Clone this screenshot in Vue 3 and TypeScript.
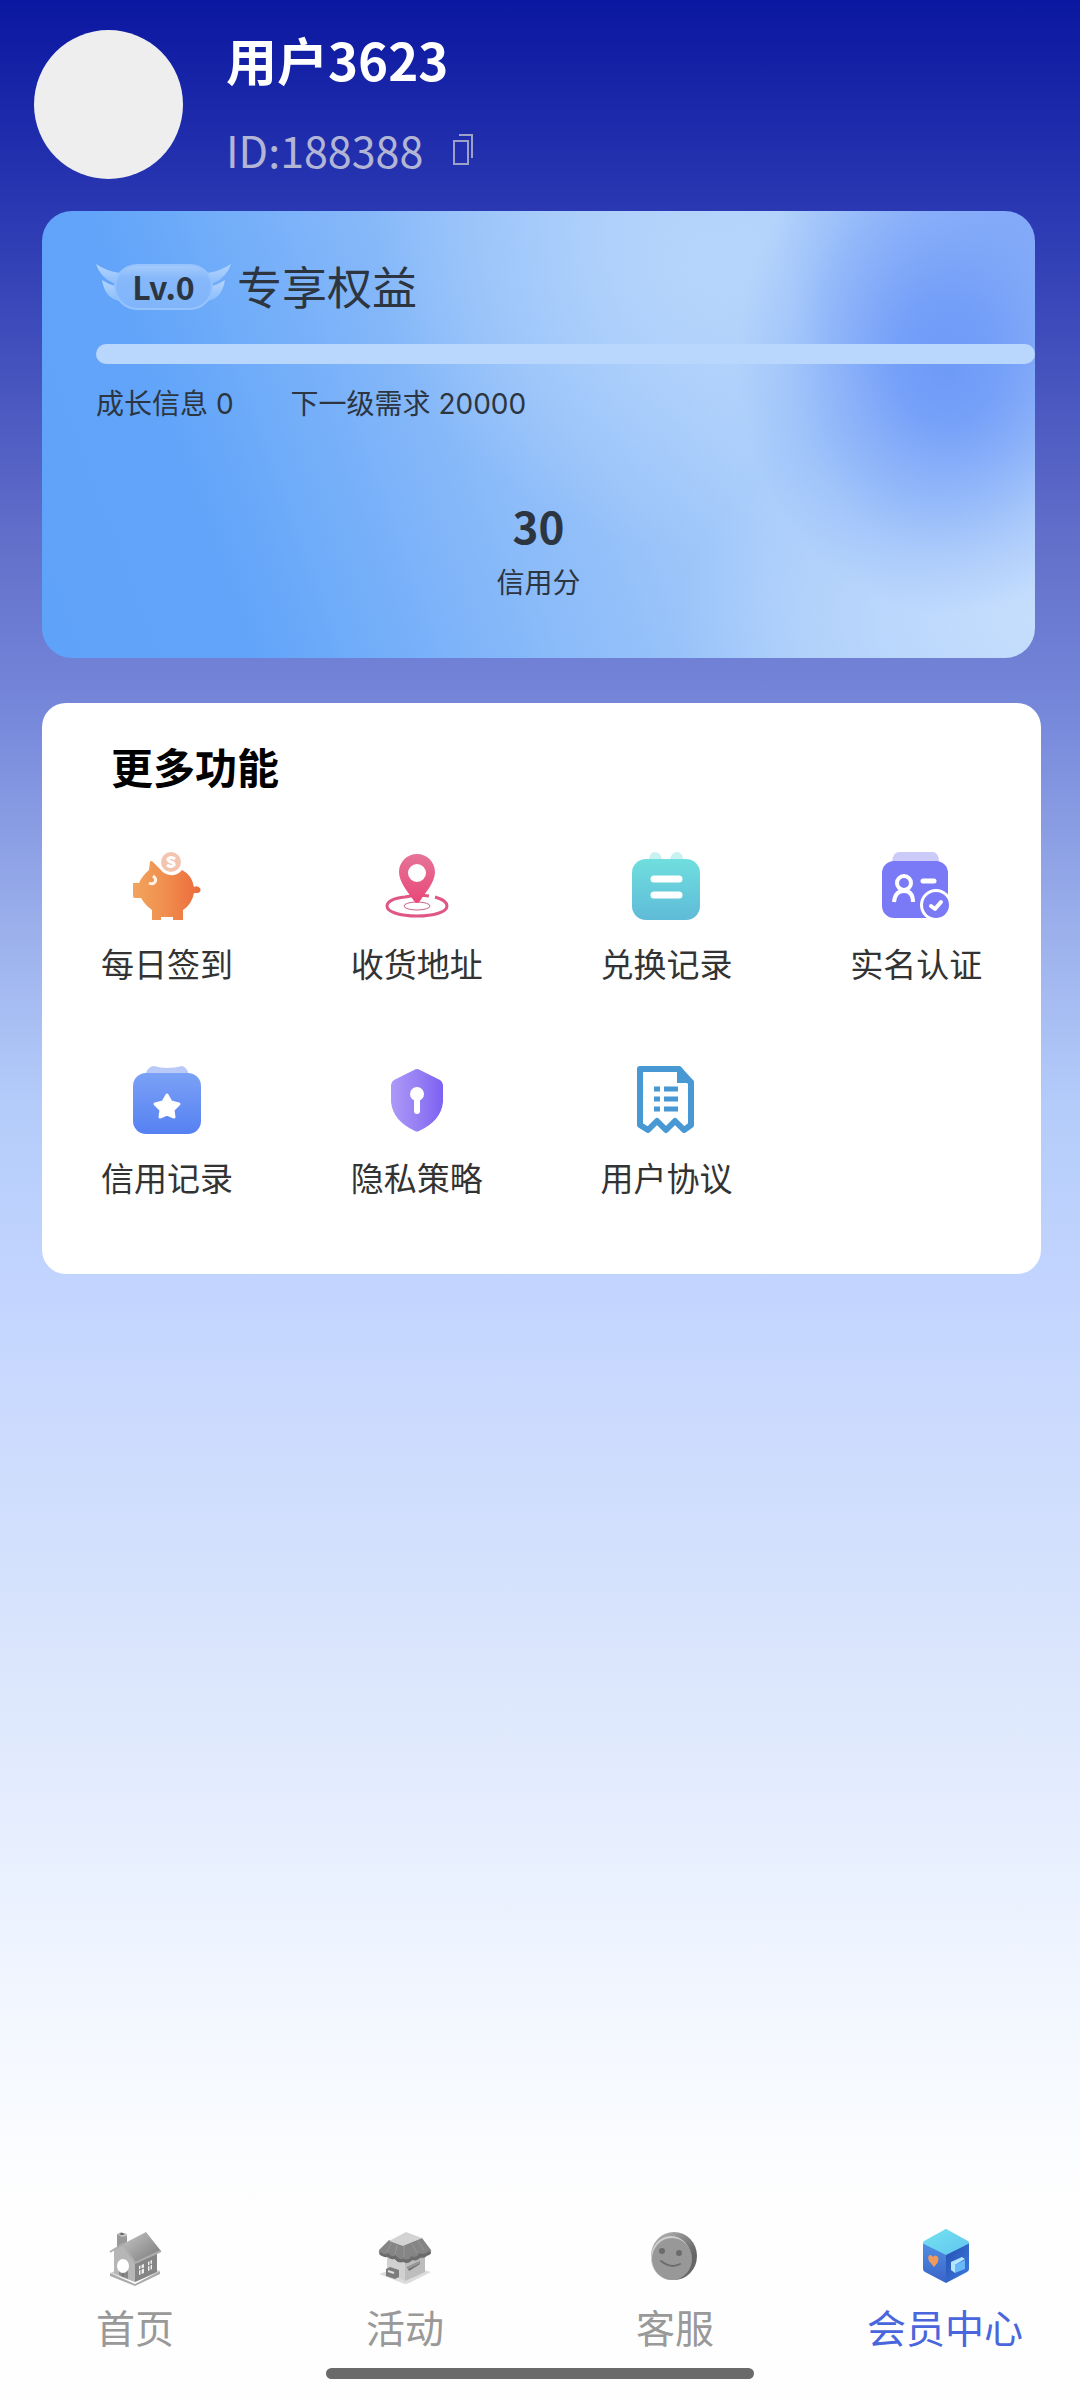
<script setup lang="ts">
import { ref } from 'vue'

interface Feature {
  key: string
  label: string
}

interface Tab {
  key: string
  label: string
}

const user = { name: '用户3623', id: '188388' }
const level = { name: 'Lv.0', growth: 0, next: 20000, credit: 30 }

const features: Feature[] = [
  { key: 'checkin', label: '每日签到' },
  { key: 'address', label: '收货地址' },
  { key: 'exchange', label: '兑换记录' },
  { key: 'identity', label: '实名认证' },
  { key: 'credit', label: '信用记录' },
  { key: 'privacy', label: '隐私策略' },
  { key: 'terms', label: '用户协议' },
]

const tabs: Tab[] = [
  { key: 'home', label: '首页' },
  { key: 'events', label: '活动' },
  { key: 'service', label: '客服' },
  { key: 'member', label: '会员中心' },
]

const activeTab = ref('member')

function copyId(): void {
  navigator.clipboard?.writeText(user.id)
}
</script>

<template>
  <div class="page">
    <header class="profile">
      <div class="avatar"></div>
      <div class="identity">
        <h1 class="name">{{ user.name }}</h1>
        <div class="id-row">
          <span>ID:{{ user.id }}</span>
          <button class="copy" type="button" aria-label="复制" @click="copyId">
            <svg width="20" height="32" viewBox="0 0 20 32" fill="none" stroke="currentColor" stroke-width="2">
              <rect x="1" y="8" width="14" height="23" />
              <path d="M6 2H19V25" />
            </svg>
          </button>
        </div>
      </div>
    </header>

    <main>
      <section class="level-card">
        <div class="level-title">
          <span class="badge">
            <svg class="badge-art" viewBox="0 0 135 46" aria-hidden="true">
              <defs>
                <linearGradient id="wing" x1="0" y1="0" x2="0" y2="1">
                  <stop offset="0" stop-color="#b4d5fe" />
                  <stop offset="1" stop-color="#8bbcfb" />
                </linearGradient>
                <linearGradient id="pill" x1="0" y1="0" x2="0" y2="1">
                  <stop offset="0" stop-color="#a6ccfc" />
                  <stop offset="0.3" stop-color="#86b8fa" />
                  <stop offset="1" stop-color="#80b5fb" />
                </linearGradient>
              </defs>
              <g fill="url(#wing)">
                <path d="M0 0Q10 7 24 9L20 21L17 19Q4 13 0 0Z" />
                <path d="M6 16Q12 20 19 22L24 37Q9 35 6 16Z" />
                <path d="M135 0Q125 7 111 9L115 21L118 19Q131 13 135 0Z" />
                <path d="M129 16Q123 20 116 22L111 37Q126 35 129 16Z" />
              </g>
              <rect x="19" y="1" width="97" height="44" rx="22" fill="url(#pill)" stroke="#97c3fc" stroke-width="2" />
            </svg>
            <span class="badge-text">{{ level.name }}</span>
          </span>
          <h2 class="level-heading">专享权益</h2>
        </div>
        <progress class="growth" :value="level.growth" :max="level.next" aria-label="成长信息"></progress>
        <div class="level-meta">
          <span>成长信息 {{ level.growth }}</span>
          <span>下一级需求 {{ level.next }}</span>
        </div>
        <div class="credit">
          <strong class="credit-value">{{ level.credit }}</strong>
          <span class="credit-label">信用分</span>
        </div>
      </section>

      <section class="features">
        <h2 class="features-title">更多功能</h2>
        <div class="grid">
          <button v-for="item in features" :key="item.key" class="feature" type="button">
            <svg v-if="item.key === 'checkin'" class="icon" viewBox="0 0 68 68">
              <defs>
                <linearGradient id="pig" x1="0" y1="0" x2="1" y2="0">
                  <stop offset="0" stop-color="#f2a45e" />
                  <stop offset="0.45" stop-color="#f0904f" />
                  <stop offset="1" stop-color="#ec6a3b" />
                </linearGradient>
              </defs>
              <path fill="url(#pig)" d="M17 10Q18 8 20 10L27 17Q32 24 41 23Q46 22 49 18Q59 23 61 35Q64 33 67 36Q69 41 63 41L61 41Q59 52 50 58V68H40V65H28V68H19V58Q12 53 8 46H2Q0 46 0 44V31H6Q9 24 16 18Z" />
              <path d="M20 24Q24 27 22 30Q20 33 16 31" fill="none" stroke="#fff3e6" stroke-width="3" />
              <circle cx="38" cy="10" r="10" fill="#f3c5b1" />
              <path d="M42 7Q38 4 35 7Q35 9 38 10Q42 11 41 13Q38 16 34 13" fill="none" stroke="#fff" stroke-width="3" />
            </svg>

            <svg v-else-if="item.key === 'address'" class="icon" viewBox="0 0 68 68">
              <defs>
                <linearGradient id="pin" x1="0" y1="0" x2="0" y2="1">
                  <stop offset="0" stop-color="#e67398" />
                  <stop offset="1" stop-color="#e84878" />
                </linearGradient>
              </defs>
              <path d="M46 44Q34 42 22 45C10 46 4 50 4 54C4 60 17 64 34 64S64 60 64 54C64 50 59 47 52 45" fill="none" stroke="#e05684" stroke-width="3" />
              <ellipse cx="34" cy="54" rx="13" ry="4" fill="#fff" stroke="#c9628a" stroke-width="1" />
              <path fill="url(#pin)" fill-rule="evenodd" d="M34 2C44 2 52 10 52 20C52 30 43 40 37 49Q34 53 31 49C25 40 16 30 16 20C16 10 24 2 34 2ZM34 12A9 9 0 1 0 34 30A9 9 0 1 0 34 12Z" />
            </svg>

            <svg v-else-if="item.key === 'exchange'" class="icon" viewBox="0 0 68 68">
              <defs>
                <linearGradient id="sheet" x1="0" y1="0" x2="0" y2="1">
                  <stop offset="0" stop-color="#70dede" />
                  <stop offset="1" stop-color="#5fbbd8" />
                </linearGradient>
              </defs>
              <path fill="#c8f2f2" d="M17 7Q18 0 23 0T30 7ZM38 7Q40 0 45 0T51 7Z" />
              <rect y="7" width="68" height="61" rx="14" fill="url(#sheet)" />
              <path d="M22 27H47M22 43H47" stroke="#fff" stroke-width="7" stroke-linecap="round" />
            </svg>

            <svg v-else-if="item.key === 'identity'" class="icon" viewBox="0 0 68 68">
              <path fill="#cccaf8" d="M10 10Q11 0 17 0H51Q57 1 57 10Z" />
              <rect x="0" y="9" width="66" height="57" rx="12" fill="#7b7af6" />
              <g fill="none" stroke="#fff" stroke-width="4">
                <circle cx="22" cy="31" r="7" />
                <path d="M12 50Q13 39 22 39T31 50" />
                <path d="M41 29H52" stroke-width="5" stroke-linecap="round" />
              </g>
              <circle cx="54" cy="53" r="16" fill="#fff" />
              <circle cx="54" cy="53" r="13" fill="#7b7af6" />
              <path d="M49 54L53 57L59 50" fill="none" stroke="#fff" stroke-width="4" stroke-linecap="round" stroke-linejoin="round" />
            </svg>

            <svg v-else-if="item.key === 'credit'" class="icon" viewBox="0 0 68 68">
              <defs>
                <linearGradient id="wallet" x1="0" y1="0" x2="0" y2="1">
                  <stop offset="0" stop-color="#7ba1f6" />
                  <stop offset="1" stop-color="#5681f2" />
                </linearGradient>
              </defs>
              <path fill="#b9caf8" d="M12 9Q15 0 21 0Q34 4 49 0Q54 1 56 9Z" />
              <rect y="7" width="68" height="61" rx="13" fill="url(#wallet)" />
              <path d="M34 29L38 36L46 38L40 44L41 51L34 48L27 51L28 44L22 38L30 36Z" fill="#fff" stroke="#fff" stroke-width="3" stroke-linejoin="round" />
            </svg>

            <svg v-else-if="item.key === 'privacy'" class="icon" viewBox="0 0 68 68">
              <defs>
                <linearGradient id="shield" x1="0" y1="0" x2="1" y2="0">
                  <stop offset="0" stop-color="#ad99f7" />
                  <stop offset="0.5" stop-color="#9680f4" />
                  <stop offset="1" stop-color="#7d61f2" />
                </linearGradient>
              </defs>
              <path fill="url(#shield)" d="M31 4Q34 2 37 4L57 14Q60 16 60 19V36Q58 55 36 65Q34 66 32 65Q10 55 8 36V19Q8 16 11 14Z" />
              <circle cx="34" cy="28" r="7" fill="#fff" />
              <path d="M34 30V45" stroke="#fff" stroke-width="6" stroke-linecap="round" />
            </svg>

            <svg v-else class="icon" viewBox="0 0 68 68">
              <path d="M8 3H47L59 17V59L52 64L43 55L34 64L25 55L16 64L8 59Z" fill="#fff" stroke="#4798d3" stroke-width="6" stroke-linejoin="round" />
              <path d="M45 3H50L62 15V17H45Z" fill="#4798d3" />
              <path d="M22 23H28M32 23H46M22 33H28M32 33H46M22 43H28M32 43H46" stroke="#4798d3" stroke-width="5" />
            </svg>

            <span class="feature-label">{{ item.label }}</span>
          </button>
        </div>
      </section>
    </main>

    <footer class="bottom">
      <nav class="tabs">
        <a
          v-for="tab in tabs"
          :key="tab.key"
          :href="'#' + tab.key"
          class="tab"
          :class="{ active: activeTab === tab.key }"
          @click.prevent="activeTab = tab.key"
        >
          <svg v-if="tab.key === 'home'" class="tab-icon" viewBox="0 0 60 60">
            <defs>
              <linearGradient id="roof" x1="0" y1="0" x2="1" y2="1">
                <stop offset="0" stop-color="#c6c6c6" />
                <stop offset="1" stop-color="#777" />
              </linearGradient>
            </defs>
            <path fill="#999" d="M12 8L22 9V22L12 25Z" />
            <path fill="#c4c4c4" d="M12 8L16 6L22 8V10L17 11Z" />
            <path fill="#555" d="M14 8L17 7L20 8L17 9Z" />
            <path fill="#aaa" d="M5 47L30 58L55 45V48L30 60L5 50Z" />
            <path fill="#ccc" d="M5 47L30 56L55 45L30 38Z" />
            <path fill="#b6b6b6" d="M9 24L18 19L30 36V56L9 47Z" />
            <path fill="#858585" d="M30 36L52 26V46L30 56Z" />
            <path fill="#888" d="M14 43H23V53L14 49Z" />
            <path d="M18 43V51" stroke="#666" />
            <ellipse cx="18" cy="40" rx="6" ry="7" fill="#fff" />
            <path fill="url(#roof)" d="M18 18L41 6L56 25L30 37Z" />
            <path d="M5 26L18 18L30 37L56 25" fill="none" stroke="#adadad" stroke-width="2" />
            <path fill="#f0f0f0" d="M34 40L39 38V47L34 49ZM43 36L47 34V43L43 45Z" />
            <path d="M36 39V48M34 44L39 42M45 35V44M43 40L47 38" stroke="#777" />
          </svg>

          <svg v-else-if="tab.key === 'events'" class="tab-icon" viewBox="0 0 60 60">
            <path fill="#dcdcdc" d="M4 48L30 39L56 46L34 57Q31 59 27 57Z" />
            <path fill="#d0d0d0" d="M12 28L30 34V55L12 47Z" />
            <path fill="#bdbdbd" d="M30 34L50 26V46L30 55Z" />
            <path fill="#858585" d="M14 14L28 19L47 12L56 24Q57 30 52 29Q50 33 45 32Q42 36 37 34Q33 39 28 36Q23 38 20 33Q16 34 13 31Q9 32 8 29Q3 29 4 24Z" />
            <path d="M5 27Q9 31 13 29Q16 33 20 31Q24 36 28 34Q33 37 37 32Q42 34 45 29Q50 31 55 26" fill="none" stroke="#6c6c6c" stroke-width="3" />
            <path d="M16 17L12 26M22 19L20 29M29 20V31M37 18L42 27M43 15L49 24" stroke="#989898" />
            <path fill="#d3d3d3" d="M14 15L31 6L47 12L28 20Z" />
            <path fill="#7c7c7c" d="M11 43L15 41L24 44V51L20 53L11 50Z" />
            <path d="M13 45L19 47" stroke="#ddd" stroke-width="2" />
            <path fill="#707070" d="M32 41L45 35V38L34 45Z" />
            <path d="M33 42L45 36" stroke="#999" stroke-width="2" />
          </svg>

          <svg v-else-if="tab.key === 'service'" class="tab-icon" viewBox="0 0 60 60">
            <defs>
              <linearGradient id="coin" x1="0" y1="0" x2="1" y2="1">
                <stop offset="0.2" stop-color="#a5a5a5" />
                <stop offset="0.7" stop-color="#666" />
              </linearGradient>
            </defs>
            <ellipse cx="29" cy="30" rx="23" ry="24" fill="url(#coin)" />
            <ellipse cx="26" cy="32" rx="20" ry="22" fill="#d0d0d0" />
            <ellipse cx="27" cy="33" rx="20" ry="21" fill="#989898" />
            <ellipse cx="17" cy="25" rx="3" ry="3" fill="#6c6c6c" />
            <ellipse cx="34" cy="27" rx="3" ry="3" fill="#6c6c6c" />
            <path d="M16 35Q26 43 35 38" fill="none" stroke="#6c6c6c" stroke-width="2" stroke-linecap="round" />
          </svg>

          <svg v-else class="tab-icon" viewBox="0 0 60 60">
            <defs>
              <linearGradient id="cubeTop" x1="0" y1="0" x2="1" y2="1">
                <stop offset="0" stop-color="#72e4ee" />
                <stop offset="1" stop-color="#63c4f1" />
              </linearGradient>
              <linearGradient id="cubeLeft" x1="0" y1="0" x2="0" y2="1">
                <stop offset="0" stop-color="#4f8fe2" />
                <stop offset="1" stop-color="#3a63c8" />
              </linearGradient>
              <linearGradient id="cubeRight" x1="0" y1="0" x2="1" y2="1">
                <stop offset="0" stop-color="#2450b0" />
                <stop offset="1" stop-color="#3e7ce0" />
              </linearGradient>
            </defs>
            <path fill="url(#cubeLeft)" d="M8 17L31 28V57L10 46Q8 45 8 43Z" />
            <path fill="url(#cubeRight)" d="M31 28L54 17V43Q54 45 52 46L31 57Z" />
            <path fill="url(#cubeTop)" d="M29 4Q31 2 33 4L53 15Q55 17 53 18L31 29L9 18Q7 17 9 15Z" />
            <path fill="#f29a5c" d="M18 31Q20 28 23 31Q25 35 19 41L14 35Q12 30 15 29Q17 29 18 31Z" />
            <path fill="#b5e6ff" d="M36 36L47 31L50 33L40 39V47L36 44Z" />
            <path fill="#67b9fa" d="M40 39L50 34V43L40 47Z" />
          </svg>
          <span class="tab-label">{{ tab.label }}</span>
        </a>
      </nav>
      <div class="home-indicator"></div>
    </footer>
  </div>
</template>

<style>
body {
  margin: 0;
}
</style>

<style scoped>
.page {
  box-sizing: border-box;
  display: flex;
  flex-direction: column;
  min-height: 100vh;
  font-family: "Noto Sans CJK SC", "Noto Sans", sans-serif;
  color: #333;
  background: linear-gradient(
    #0a17a0 0%,
    #2b39b3 9%,
    #6471cb 23%,
    #7789db 30%,
    #9cb1ec 39%,
    #b4ccfa 46%,
    #c3d5ff 54%,
    #d7e3fc 67%,
    #eef4ff 81%,
    #fefefe 92%,
    #fefefe 100%
  );
}

h1,
h2 {
  margin: 0;
}

button {
  padding: 0;
  border: 0;
  background: none;
  color: inherit;
  font: inherit;
  cursor: pointer;
}

.profile {
  display: flex;
  gap: 43px;
  padding: 30px 34px 32px;
}

.avatar {
  flex: none;
  width: 149px;
  height: 149px;
  border-radius: 50%;
  background: #eee;
}

.identity {
  display: flex;
  flex-direction: column;
  gap: 32px;
}

.name {
  font-size: 51px;
  line-height: 58px;
  font-weight: 700;
  color: #fff;
}

.id-row {
  display: flex;
  align-items: center;
  gap: 30px;
  font-size: 43px;
  line-height: 58px;
  color: #b2b5d3;
}

.copy {
  display: flex;
  color: #9da1c8;
}

.level-card {
  margin: 0 45px 45px 42px;
  padding: 46px 0 57px 54px;
  border-radius: 30px;
  color: #2c3540;
  background:
    radial-gradient(ellipse 21% 56% at 91% 34%, #6e9af8 0%, #6e9af8d8 25%, #759ff898 50%, #7ba4f840 76%, #7ba4f800 100%),
    radial-gradient(ellipse 26% 60% at 100% 0%, #86adf8 0%, #86adf8a0 45%, #86adf800 100%),
    radial-gradient(ellipse 36% 50% at 100% 92%, #c6defd 0%, #c6defd00 100%),
    radial-gradient(ellipse 34% 64% at 68% 12%, #b9d7fcd8 0%, #b9d7fc70 50%, #b9d7fc00 100%),
    linear-gradient(70deg, #5fa2f9 0%, #61a4f9 18%, #8bbbf9 45%, #a5cafa 66%, #b4d3fb 100%);
}

.level-title {
  display: flex;
  align-items: center;
  gap: 6px;
}

.badge {
  position: relative;
  display: flex;
  justify-content: center;
  width: 135px;
}

.badge-art {
  position: absolute;
  top: 0;
  left: 0;
  width: 100%;
}

.badge-text {
  position: relative;
  font-size: 32px;
  line-height: 44px;
  font-weight: 700;
}

.level-heading {
  font-size: 45px;
  line-height: 58px;
  font-weight: 400;
}

.growth {
  appearance: none;
  display: block;
  width: 100%;
  height: 20px;
  margin-top: 29px;
  border: 0;
  border-radius: 10px;
  overflow: hidden;
  background: #b9d7fc;
}

.growth::-webkit-progress-bar {
  background: #b9d7fc;
}

.growth::-webkit-progress-value {
  background: #4d8ff5;
}

.level-meta {
  display: flex;
  gap: 57px;
  margin-top: 20px;
  font-family: Inter, "Noto Sans CJK SC", sans-serif;
  font-size: 28px;
  line-height: 40px;
}

.credit {
  display: flex;
  flex-direction: column;
  align-items: center;
  gap: 8px;
  margin: 73px 54px 0 0;
}

.credit-value {
  font-size: 44px;
  line-height: 56px;
}

.credit-label {
  font-size: 28px;
  line-height: 40px;
}

.features {
  margin: 0 39px 0 42px;
  padding: 33px 0 72px;
  border-radius: 24px;
  background: #fff;
}

.features-title {
  padding-left: 69px;
  font-size: 42px;
  line-height: 60px;
  font-weight: 700;
  color: #000;
}

.grid {
  display: grid;
  grid-template-columns: repeat(4, 1fr);
  row-gap: 78px;
  margin-top: 56px;
}

.feature {
  display: flex;
  flex-direction: column;
  align-items: center;
  gap: 18px;
}

.icon {
  width: 68px;
  height: 68px;
}

.feature-label {
  font-size: 33px;
  line-height: 50px;
}

.bottom {
  margin-top: auto;
  padding: 24px 0 21px;
}

.tabs {
  display: grid;
  grid-template-columns: repeat(4, 1fr);
}

.tab {
  display: flex;
  flex-direction: column;
  align-items: center;
  gap: 15px;
  color: #999;
  text-decoration: none;
}

.tab.active {
  color: #4a66dc;
}

.tab-icon {
  width: 60px;
  height: 60px;
}

.tab-label {
  font-size: 39px;
  line-height: 50px;
}

.home-indicator {
  width: 428px;
  max-width: 60%;
  height: 11px;
  margin: 17px auto 0;
  border-radius: 6px;
  background: #6a6a6a;
}
</style>
